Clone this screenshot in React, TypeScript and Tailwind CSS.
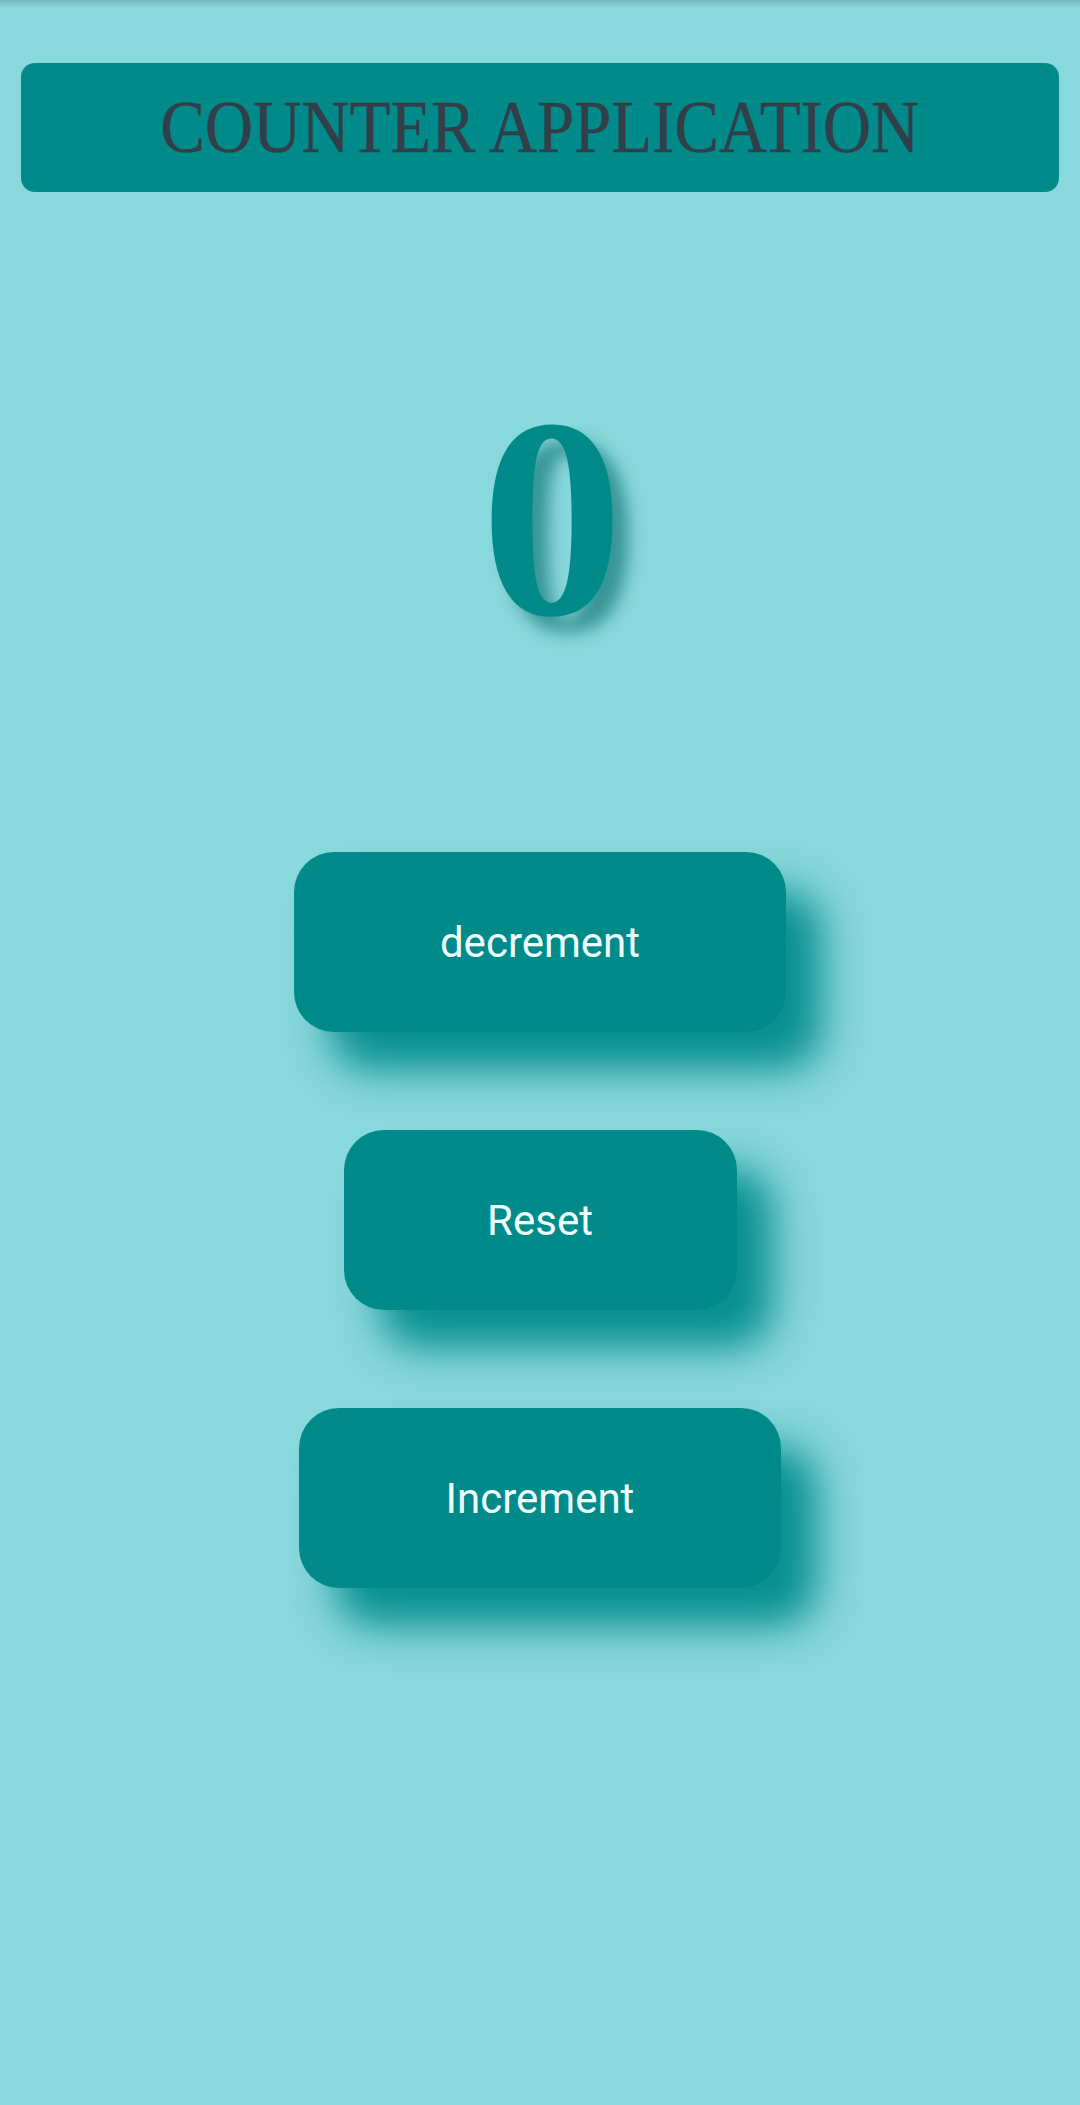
import { useState } from "react";

const buttonBase =
  "h-[180px] rounded-[40px] bg-[#008b8a] text-[#effffe] text-[42px] font-['Roboto',sans-serif] flex items-center justify-center shadow-[36px_38px_40px_rgba(0,139,139,0.95)]";

export default function App() {
  const [count, setCount] = useState(0);

  return (
    <div className="relative min-h-screen bg-[#89d8db] flex flex-col items-center">
      {/* status bar shadow */}
      <div className="absolute top-0 left-0 w-full h-[8px] bg-gradient-to-b from-black/15 to-transparent pointer-events-none" />

      <header className="mt-[63px] w-[1038px] h-[129px] rounded-[14px] bg-[#008b8a] flex items-center justify-center">
        <h1 className="text-[73px] leading-none text-[#323e48] font-['Liberation_Serif',serif] scale-x-[0.915] whitespace-nowrap [-webkit-text-stroke:0.4px_#323e48]">
          COUNTER APPLICATION
        </h1>
      </header>

      <div className="mt-[184px] ml-[24px] h-[285px] text-[285px] leading-none font-bold text-[#008b8a] font-['Liberation_Serif',serif] [text-shadow:16px_16px_16px_rgba(0,105,105,0.6)]">
        {count}
      </div>

      <div className="mt-[191px] flex flex-col items-center gap-[98px]">
        <button
          className={`${buttonBase} w-[492px]`}
          onClick={() => setCount((c) => c - 1)}
        >
          decrement
        </button>
        <button className={`${buttonBase} w-[393px]`} onClick={() => setCount(0)}>
          Reset
        </button>
        <button
          className={`${buttonBase} w-[482px]`}
          onClick={() => setCount((c) => c + 1)}
        >
          Increment
        </button>
      </div>
    </div>
  );
}
